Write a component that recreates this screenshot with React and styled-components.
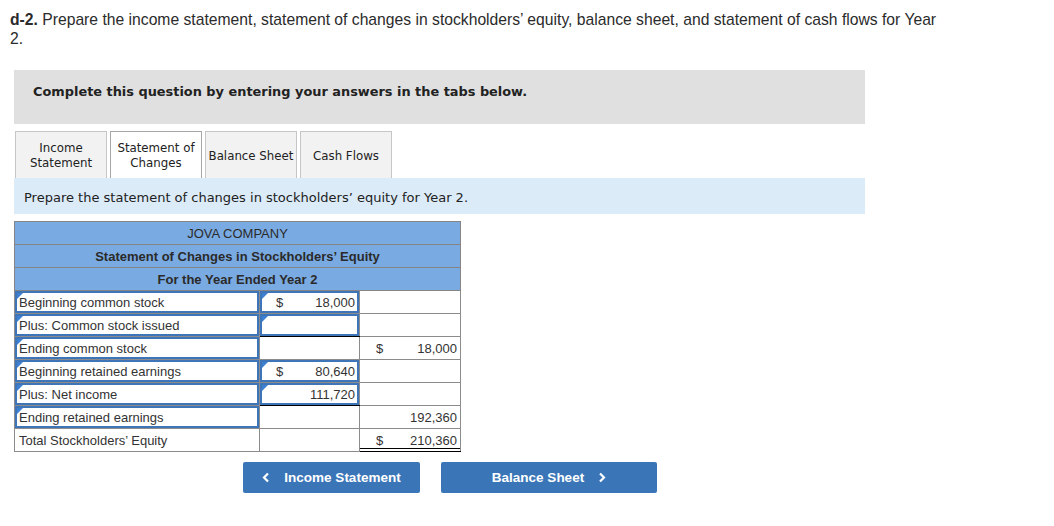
import React from 'react';
import styled, { createGlobalStyle, css } from 'styled-components';

const GlobalStyle = createGlobalStyle`
  body {
    margin: 0;
    background: #fff;
    font-family: "Liberation Sans", Arial, sans-serif;
    color: #333;
  }
`;

const Page = styled.div`
  padding: 11px 10px 20px 10px;
  width: 1034px;
`;

const Question = styled.p`
  margin: 0;
  width: 1000px;
  font-size: 15.7px;
  line-height: 18.5px;
  color: #2b2b2b;
`;

const Panel = styled.div`
  margin: 22px 0 0 4px;
  width: 851px;
`;

const Notice = styled.div`
  background: #e0e0e0;
  height: 54px;
  box-sizing: border-box;
  padding: 14px 0 0 19px;
  line-height: 16px;
  font-family: "DejaVu Sans", Verdana, sans-serif;
  font-weight: bold;
  font-size: 12.9px;
  color: #222;
`;

const Tabs = styled.div`
  display: flex;
  gap: 3px;
  margin-top: 7px;
  padding-left: 1px;
`;

const Tab = styled.div`
  width: 92px;
  height: 47px;
  box-sizing: border-box;
  display: flex;
  align-items: center;
  justify-content: center;
  text-align: center;
  padding-top: 2px;
  font-family: "DejaVu Sans", Verdana, sans-serif;
  font-size: 11.8px;
  line-height: 15px;
  color: #222;
  background: #f2f2f2;
  border: 1px solid #c6c6c6;
  border-bottom: none;
  white-space: nowrap;
  ${(p) =>
    p.active &&
    css`
      background: #fff;
      border-color: #a6a6a6;
    `}
`;

const Instruction = styled.div`
  background: #dcebf8;
  height: 36px;
  display: flex;
  align-items: center;
  padding: 2px 0 0 10px;
  box-sizing: border-box;
  font-family: "DejaVu Sans", Verdana, sans-serif;
  font-size: 13px;
  color: #222;
`;

const Sheet = styled.table`
  margin-top: 7px;
  border-collapse: collapse;
  width: 446px;
  table-layout: fixed;
  font-size: 13px;
  color: #333;
`;

const HeadCell = styled.td`
  height: 22px;
  padding: 0;
  background: #7aaae2;
  border: 1px solid #858585;
  text-align: center;
  font-size: 13px;
  font-weight: ${(p) => (p.bold ? 'bold' : 'normal')};
  color: #2a2a2a;
`;

const Cell = styled.td`
  height: 22px;
  padding: 0;
  border: 1px solid #8c8c8c;
  ${(p) =>
    p.rule === 'single' &&
    css`
      border-bottom-color: #000;
      box-shadow: inset 0 -1px 0 #000;
    `}
  ${(p) =>
    p.rule === 'double' &&
    css`
      border-bottom-color: #000;
      box-shadow: inset 0 -2px 0 #fff, inset 0 -3px 0 #000;
    `}
`;

const Field = styled.div`
  position: relative;
  box-sizing: border-box;
  height: 22px;
  display: flex;
  align-items: center;
  padding: 0 3px 0 4px;
  white-space: nowrap;
  ${(p) =>
    p.input &&
    css`
      border: 2px solid #3d75b8;
      padding: 0 2px 0 2px;
    `}
`;

const Marker = styled.span`
  position: absolute;
  top: 0;
  left: 0;
  width: 0;
  height: 0;
  border-top: 6px solid #3d7fd0;
  border-right: 6px solid transparent;
`;

const Dollar = styled.span`
  margin-left: 12px;
`;

const Amount = styled.span`
  margin-left: auto;
`;

const Footer = styled.div`
  display: flex;
  gap: 21px;
  margin: 10px 0 0 229px;
`;

const NavButton = styled.button`
  width: ${(p) => p.width}px;
  height: 31px;
  border: none;
  border-radius: 2px;
  background: #3a75b8;
  color: #fff;
  font-family: "Liberation Sans", Arial, sans-serif;
  font-weight: bold;
  font-size: 13.5px;
  display: flex;
  align-items: center;
  justify-content: center;
  gap: 14px;
  padding: 0;
  cursor: pointer;
`;

const Chevron = ({ dir }) => (
  <svg width="8" height="11" viewBox="0 0 8 11">
    <path
      d={dir === 'left' ? 'M6 1.5 L2 5.5 L6 9.5' : 'M2 1.5 L6 5.5 L2 9.5'}
      fill="none"
      stroke="#fff"
      strokeWidth="2.2"
    />
  </svg>
);

const rows = [
  { label: 'Beginning common stock', labelInput: true, mid: { input: true, dollar: true, value: '18,000' } },
  { label: 'Plus: Common stock issued', labelInput: true, mid: { input: true, rule: 'single' } },
  { label: 'Ending common stock', labelInput: true, right: { dollar: true, value: '18,000' } },
  { label: 'Beginning retained earnings', labelInput: true, mid: { input: true, dollar: true, value: '80,640' } },
  { label: 'Plus: Net income', labelInput: true, mid: { input: true, value: '111,720', rule: 'single' } },
  { label: 'Ending retained earnings', labelInput: true, right: { value: '192,360' } },
  { label: 'Total Stockholders\u2019 Equity', right: { dollar: true, value: '210,360', rule: 'double' } },
];

function Amounts({ data }) {
  if (!data) return <Field />;
  return (
    <Field input={data.input}>
      {data.input && <Marker />}
      {data.dollar && <Dollar>$</Dollar>}
      {data.value && <Amount>{data.value}</Amount>}
    </Field>
  );
}

export default function App() {
  return (
    <>
      <GlobalStyle />
      <Page>
        <Question>
          <b>d-2.</b> Prepare the income statement, statement of changes in stockholders’ equity, balance sheet, and statement of cash flows for Year
          <br />
          2.
        </Question>

        <Panel>
          <Notice>Complete this question by entering your answers in the tabs below.</Notice>

          <Tabs>
            <Tab>Income<br />Statement</Tab>
            <Tab active>Statement of<br />Changes</Tab>
            <Tab>Balance Sheet</Tab>
            <Tab>Cash Flows</Tab>
          </Tabs>

          <Instruction>Prepare the statement of changes in stockholders’ equity for Year 2.</Instruction>

          <Sheet>
            <colgroup>
              <col style={{ width: 245 }} />
              <col style={{ width: 100 }} />
              <col style={{ width: 101 }} />
            </colgroup>
            <tbody>
              <tr><HeadCell colSpan={3}>JOVA COMPANY</HeadCell></tr>
              <tr><HeadCell colSpan={3} bold>Statement of Changes in Stockholders’ Equity</HeadCell></tr>
              <tr><HeadCell colSpan={3} bold>For the Year Ended Year 2</HeadCell></tr>
              {rows.map((r) => (
                <tr key={r.label}>
                  <Cell>
                    <Field input={r.labelInput}>
                      {r.labelInput && <Marker />}
                      {r.label}
                    </Field>
                  </Cell>
                  <Cell rule={r.mid?.rule}>
                    <Amounts data={r.mid} />
                  </Cell>
                  <Cell rule={r.right?.rule}>
                    <Amounts data={r.right} />
                  </Cell>
                </tr>
              ))}
            </tbody>
          </Sheet>

          <Footer>
            <NavButton width={177}>
              <Chevron dir="left" />
              Income Statement
            </NavButton>
            <NavButton width={216}>
              Balance Sheet
              <Chevron dir="right" />
            </NavButton>
          </Footer>
        </Panel>
      </Page>
    </>
  );
}
